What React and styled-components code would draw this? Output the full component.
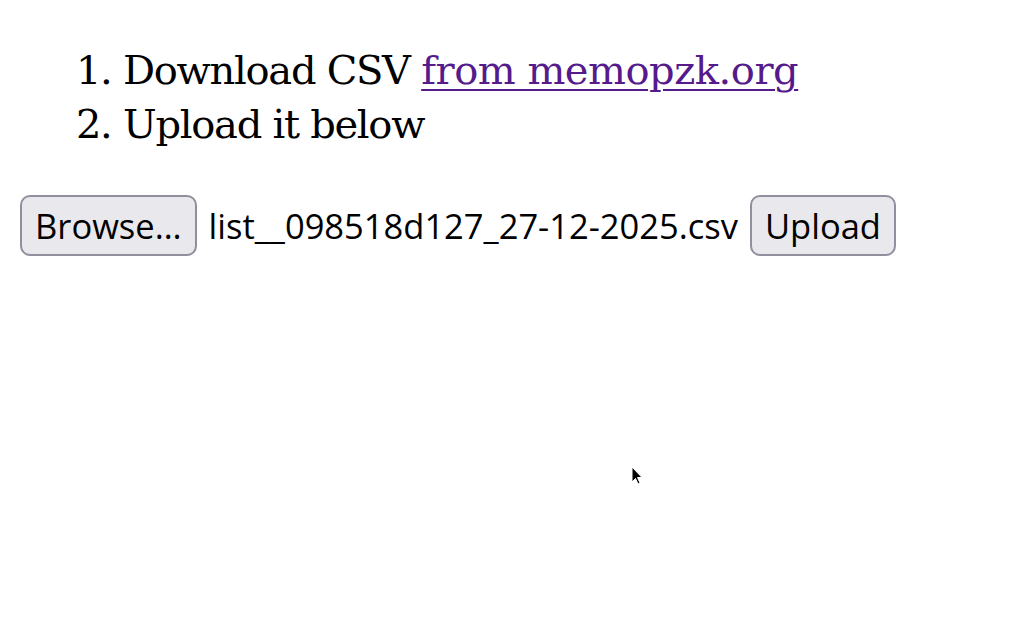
import React from 'react';
import styled, { createGlobalStyle } from 'styled-components';

const GlobalStyle = createGlobalStyle`
  html, body {
    margin: 0;
    background: #ffffff;
  }
  body {
    padding: 0 20px;
    font-family: "DejaVu Serif", "Liberation Serif", serif;
    color: #000000;
  }
`;

const Steps = styled.ol`
  margin: 0;
  padding: 43px 0 0 103px;
  font-size: 40px;
  line-height: 54px;
  letter-spacing: -0.032em;
`;

const StepLink = styled.a`
  color: #551a8b;
  letter-spacing: -0.012em;
  text-decoration: underline;
  text-decoration-thickness: 2px;
  text-underline-offset: 5px;
`;

const UploadForm = styled.form`
  display: flex;
  align-items: center;
  gap: 12px;
  margin-top: 44px;
  font-family: "Open Sans", "Noto Sans", sans-serif;
  font-size: 34.5px;
`;

const FormButton = styled.button`
  height: 61px;
  padding: 0 13px;
  border: 2px solid #8f8f9d;
  border-radius: 10px;
  background: #e9e9ed;
  color: #000000;
  font: inherit;
  cursor: default;
`;

const FileName = styled.span`
  white-space: nowrap;
`;

const Pointer = styled.svg`
  position: absolute;
  left: 631px;
  top: 466px;
`;

export default function App() {
  return (
    <>
      <GlobalStyle />
      <Steps>
        <li>
          Download CSV <StepLink href="#">from memopzk.org</StepLink>
        </li>
        <li>Upload it below</li>
      </Steps>
      <UploadForm onSubmit={(e) => e.preventDefault()}>
        <FormButton type="button">Browse…</FormButton>
        <FileName>list__098518d127_27-12-2025.csv</FileName>
        <FormButton type="submit">Upload</FormButton>
      </UploadForm>
      <Pointer width="13" height="20" viewBox="0 0 13 20">
        <path d="M1 1 L1 16 L4.5 12.5 L7 18 L9 17 L6.5 11.5 L11 11.5 Z" fill="#000" stroke="#fff" strokeWidth="1" />
      </Pointer>
    </>
  );
}
